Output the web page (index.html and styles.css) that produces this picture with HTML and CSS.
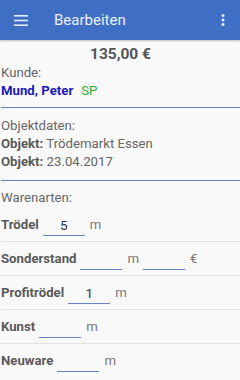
FILE: index.html
```html
<!DOCTYPE html>
<html lang="de">
<head>
<meta charset="utf-8">
<link rel="stylesheet" href="styles.css">
</head>
<body>
<header class="toolbar">
  <svg class="menu" width="14" height="11" viewBox="0 0 14 11"><rect y="0" width="14" height="1.6" fill="#e6ecf8"/><rect y="4.7" width="14" height="1.6" fill="#e6ecf8"/><rect y="9.4" width="14" height="1.6" fill="#e6ecf8"/></svg>
  <span class="title">Bearbeiten</span>
  <svg class="more" width="4" height="12" viewBox="0 0 4 12"><circle cx="2" cy="1.6" r="1.5" fill="#e6ecf8"/><circle cx="2" cy="6" r="1.5" fill="#e6ecf8"/><circle cx="2" cy="10.4" r="1.5" fill="#e6ecf8"/></svg>
</header>
<main class="content">
  <section class="sec sec-customer">
    <div class="price">135,00 €</div>
    <div class="line muted">Kunde:</div>
    <div class="line"><span class="name">Mund, Peter</span><span class="tag">SP</span></div>
  </section>
  <section class="sec sec-object">
    <div class="line muted">Objektdaten:</div>
    <div class="line"><b class="lbl">Objekt:</b> <span class="muted">Trödemarkt Essen</span></div>
    <div class="line"><b class="lbl">Objekt:</b> <span class="muted">23.04.2017</span></div>
  </section>
  <section class="sec-goods">
    <div class="line muted head">Warenarten:</div>
    <div class="row"><b class="lbl">Trödel</b><span class="field">5</span><span class="unit">m</span></div>
    <div class="row"><b class="lbl">Sonderstand</b><span class="field"></span><span class="unit">m</span><span class="field"></span><span class="unit">€</span></div>
    <div class="row"><b class="lbl">Profitrödel</b><span class="field">1</span><span class="unit">m</span></div>
    <div class="row"><b class="lbl">Kunst</b><span class="field"></span><span class="unit">m</span></div>
    <div class="row last"><b class="lbl">Neuware</b><span class="field"></span><span class="unit">m</span></div>
  </section>
</main>
</body>
</html>
```
FILE: styles.css
```css
html, body {
  margin: 0;
  padding: 0;
}
body {
  width: 240px;
  height: 380px;
  overflow: hidden;
  background: #f9f9f9;
  font-family: Roboto, "Liberation Sans", sans-serif;
  font-size: 13.2px;
  color: #5f5f5f;
}
.toolbar {
  height: 40px;
  background: #3e6fc5;
  display: flex;
  align-items: center;
  padding: 0 15px 0 14px;
  box-shadow: 0 1px 2px rgba(0,0,0,0.25);
  position: relative;
}
.menu {
  display: block;
}
.title {
  margin-left: 26px;
  font-size: 15px;
  color: #e9eef9;
  flex: 1;
}
.more {
  display: block;
}
.content {
  padding: 0 0 0 1px;
}
.sec {
  border-bottom: 1px solid #6383bd;
}
.sec-customer {
  padding: 4px 0 7px;
}
.sec-object {
  padding: 9px 0 9px;
}
.price {
  text-align: center;
  font-size: 15.5px;
  font-weight: 700;
  line-height: 20px;
  color: #555555;
}
.line {
  line-height: 18px;
  height: 18px;
}
.muted {
  color: #666666;
}
.name {
  font-weight: 700;
  color: #1a1ab8;
}
.tag {
  color: #2fb12f;
  margin-left: 8px;
}
.lbl {
  font-weight: 700;
  color: #5a5a5a;
}
.sec-goods {
  padding-top: 8px;
}
.head {
  margin-bottom: 1px;
}
.row {
  height: 33px;
  display: flex;
  align-items: center;
  border-bottom: 1px solid #e3e3e3;
}
.row.last {
  border-bottom: none;
}
.field {
  width: 42px;
  height: 18px;
  padding-bottom: 1px;
  margin: 0 5px 0 4px;
  border-bottom: 1.5px solid #6685c0;
  text-align: center;
  color: #333333;
  font-size: 13.5px;
  line-height: 18px;
  position: relative;
  top: 1px;
}
.unit {
  color: #777777;
}
```
